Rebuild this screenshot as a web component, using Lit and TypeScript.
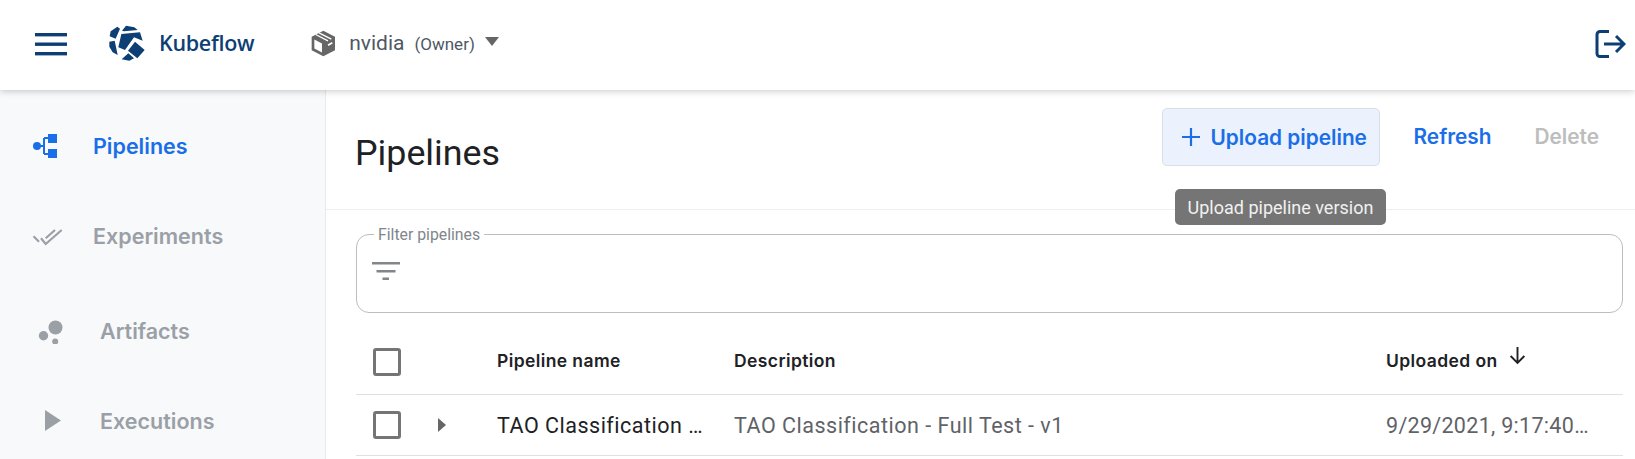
import { LitElement, html, css, svg } from "lit";
import { customElement } from "lit/decorators.js";

const navItems = [
	{
		label: "Pipelines",
		cls: "active first",
		icon: svg`<circle cx="5" cy="13" r="4"/><path d="M8 13h4M12 5v16" fill="none" stroke="currentColor" stroke-width="2"/><path d="M12 5h5M12 21h5" fill="none" stroke="currentColor" stroke-width="2"/><rect x="16" y="1" width="9" height="9"/><rect x="16" y="16" width="9" height="9"/>`,
	},
	{
		label: "Experiments",
		cls: "exp",
		icon: svg`<path d="M1.500 13.300l5.500 5.400M9 15.300l4.700 5.700L29.700 7M13.700 15.300 23 7" fill="none" stroke="currentColor" stroke-width="2.200"/>`,
	},
	{
		label: "Artifacts",
		cls: "indent art",
		icon: svg`<circle cx="23.500" cy="9.500" r="7"/><circle cx="11.500" cy="17.800" r="4.700"/><circle cx="23.200" cy="23.500" r="3"/>`,
	},
	{
		label: "Executions",
		cls: "indent exe",
		icon: svg`<path d="M13 2v21l16-10.500z"/>`,
	},
];

@customElement("app-root")
export class AppRoot extends LitElement {
	static override styles = css`
		:host {
			display: block;
			height: 459px;
			overflow: hidden;
			background: #fff;
			font-family: Roboto, sans-serif;
		}

		.top {
			position: relative;
			z-index: 2;
			display: flex;
			align-items: center;
			height: 90px;
			padding: 0 9px 4px 35px;
			box-sizing: border-box;
			background: #fff;
			box-shadow: 0 1px 7px rgba(0, 0, 0, 0.22);
			color: #0d3f75;
		}

		.burger { width: 32px; height: 23px; margin-top: 2px; }

		.logo { width: 36px; height: 36px; margin: 0 14px 0 42px; }

		.brand {
			font-family: "Open Sans", sans-serif;
			font-size: 21.500px;
			font-weight: 600;
			letter-spacing: -0.300px;
			line-height: 1;
			margin-right: 57px;
		}

		.box { width: 25px; height: 27px; margin-right: 13px; }

		.ns { font-size: 21px; color: #4e5766; margin-right: 10px; }

		.role { font-size: 17px; color: #4e5766; margin: 2px 10px 0 0; }

		.caret {
			width: 0;
			height: 0;
			margin-top: -3px;
			border-left: 7.500px solid transparent;
			border-right: 7.500px solid transparent;
			border-top: 9px solid #666;
		}

		.logout { width: 32px; height: 30px; margin-left: auto; margin-top: 2px; }

		.body { display: flex; height: 369px; }

		.side {
			flex: none;
			width: 326px;
			box-sizing: border-box;
			padding-top: 34px;
			background: #f8f9fb;
			border-right: 1px solid #e8eaed;
		}

		.item {
			display: flex;
			align-items: center;
			height: 44px;
			padding-left: 32px;
			color: #9aa0a6;
			font-family: Inter, sans-serif;
			font-size: 21.500px;
			font-weight: 600;
		}

		.item svg { width: 32px; height: 26px; fill: currentColor; flex: none; }
		.item span { margin-left: 29px; }

		.active { color: #1a6ee8; }
		.exp { margin-top: 46px; }
		.art { margin-top: 51px; }
		.exe { margin-top: 46px; }
		.indent span { margin-left: 36px; }

		.main { flex: 1; min-width: 0; }

		.bar {
			position: relative;
			display: flex;
			align-items: center;
			height: 120px;
			box-sizing: border-box;
			padding: 0 36px 3px 29px;
			border-bottom: 1px solid #eceef0;
		}

		h1 {
			margin: 0 auto 0 0;
			padding-top: 9px;
			font-size: 35.800px;
			font-weight: 400;
			color: #202124;
		}

		.btn {
			display: flex;
			align-items: center;
			align-self: flex-start;
			height: 58px;
			margin-top: 18px;
			font-family: Inter, sans-serif;
			font-size: 20.800px;
			font-weight: 600;
			color: #1a6ee8;
		}

		.upload {
			box-sizing: border-box;
			width: 218px;
			margin-right: 34px;
			padding: 0 0 0 17px;
			background: #ebf2fd;
			border: 1px solid #d9dfe7;
			border-radius: 5px;
		}

		.upload svg { width: 22px; height: 22px; margin-right: 9px; }
		.refresh { margin-right: 43px; padding-bottom: 2px; box-sizing: border-box; }
		.delete { color: #bdbdbd; padding-bottom: 2px; box-sizing: border-box; }

		.tip {
			position: absolute;
			top: 99px;
			left: 849px;
			width: 211px;
			height: 36px;
			display: flex;
			align-items: center;
			justify-content: center;
			z-index: 1;
			border-radius: 5px;
			background: #757575;
			color: #f1f1f1;
			font-size: 18px;
		}

		fieldset {
			display: flex;
			align-items: center;
			box-sizing: border-box;
			height: 87px;
			margin: 16px 12px 0 30px;
			padding: 0 0 12px 15px;
			border: 1px solid #bdbdbd;
			border-radius: 13px;
			min-width: 0;
		}

		legend {
			padding: 0 4px;
			margin-left: 2px;
			font-size: 15.800px;
			line-height: 17px;
			color: #80868b;
		}

		fieldset svg { width: 28px; height: 20px; fill: #80868b; }

		.row {
			display: grid;
			grid-template-columns: 141px 237px 652px 1fr;
			align-items: center;
			margin: 0 12px 0 30px;
			border-bottom: 1.500px solid #e0e0e0;
		}

		.head {
			box-sizing: border-box;
			height: 82px;
			padding-top: 14px;
			font-family: Inter, sans-serif;
			font-size: 17.500px;
			font-weight: 600;
			letter-spacing: 0.400px;
			color: #202124;
		}

		.head .pick { margin-top: 3px; }

		.data { height: 60px; font-size: 21.500px; letter-spacing: 0.500px; color: #5f6368; }

		.pick { display: flex; align-items: center; padding-left: 17px; }

		.check {
			width: 28px;
			height: 28px;
			box-sizing: border-box;
			border: 3px solid #757575;
			border-radius: 3px;
		}

		.expand {
			width: 0;
			height: 0;
			margin-left: 37px;
			border-top: 7.500px solid transparent;
			border-bottom: 7.500px solid transparent;
			border-left: 8px solid #666;
		}

		.cell { white-space: nowrap; overflow: hidden; text-overflow: ellipsis; }
		.name { color: #202124; width: 206px; }
		.date { width: 206px; letter-spacing: 0.300px; }

		.sort { display: flex; align-items: center; }
		.sort svg { width: 19px; height: 19px; margin: -11px 0 0 10px; }
	`;

	override render() {
		return html`
			<header class="top">
				<svg class="burger" viewBox="0 0 32 23" fill="currentColor">
					<rect y="0" width="32" height="3.400"/><rect y="9.500" width="32" height="3.400"/><rect y="19" width="32" height="3.400"/>
				</svg>
				<svg class="logo" viewBox="27 25 108 108" fill="currentColor">
					<path d="M52 30 60 36 47 66 29 59 32 44zM78 27 103 32 113 40 72 44 66 42zM64 52 120 47 128 72 102 62 75 100 55 92zM105 75 134 100 112 125 84 102zM28 75 44 72 53 115 38 107 28 90zM85 110 102 125 88 132 65 128z"/>
				</svg>
				<span class="brand">Kubeflow</span>
				<svg class="box" viewBox="33 25 75 80">
					<path d="M70 27 105 45V85L70 103 35 85V45z" fill="#666"/>
					<path d="M43 53 66 65V92L43 80z" fill="#fff"/>
					<path d="M47 38 84 57M57 33 94 52" fill="none" stroke="#fff" stroke-width="4"/>
					<path d="M84 70 97 63" fill="none" stroke="#fff" stroke-width="5"/>
				</svg>
				<span class="ns">nvidia</span>
				<span class="role">(Owner)</span>
				<span class="caret"></span>
				<svg class="logout" viewBox="0 0 32 30" fill="none" stroke="currentColor" stroke-width="3">
					<path d="M15 2.500H6a3 3 0 0 0-3 3v19a3 3 0 0 0 3 3h9M10 15h20M22 7l8 8-8 8"/>
				</svg>
			</header>
			<div class="body">
				<nav class="side">
					${navItems.map(
						(item) => html`
							<div class="item ${item.cls}">
								<svg viewBox="0 0 32 26">${item.icon}</svg>
								<span>${item.label}</span>
							</div>
						`
					)}
				</nav>
				<main class="main">
					<div class="bar">
						<h1>Pipelines</h1>
						<div class="btn upload">
							<svg viewBox="0 0 22 22" fill="none" stroke="currentColor" stroke-width="2.200"><path d="M11 2v18M2 11h18"/></svg>
							Upload pipeline
						</div>
						<div class="btn refresh">Refresh</div>
						<div class="btn delete">Delete</div>
						<div class="tip">Upload pipeline version</div>
					</div>
					<fieldset>
						<legend>Filter pipelines</legend>
						<svg viewBox="0 0 28 20"><rect width="28" height="2.500"/><rect x="4.500" y="8" width="19" height="2.500"/><rect x="10.500" y="15.500" width="6.500" height="2.500"/></svg>
					</fieldset>
					<div class="row head">
						<div class="pick"><span class="check"></span></div>
						<div>Pipeline name</div>
						<div>Description</div>
						<div class="sort">
							Uploaded on
							<svg viewBox="0 0 18 18" fill="none" stroke="#202124" stroke-width="1.800"><path d="M9 1v15M2.500 9.500 9 16l6.500-6.500"/></svg>
						</div>
					</div>
					<div class="row data">
						<div class="pick"><span class="check"></span><span class="expand"></span></div>
						<div class="cell name">TAO Classification - Full Test</div>
						<div>TAO Classification - Full Test - v1</div>
						<div class="cell date">9/29/2021, 9:17:40 AM</div>
					</div>
				</main>
			</div>
		`;
	}
}
